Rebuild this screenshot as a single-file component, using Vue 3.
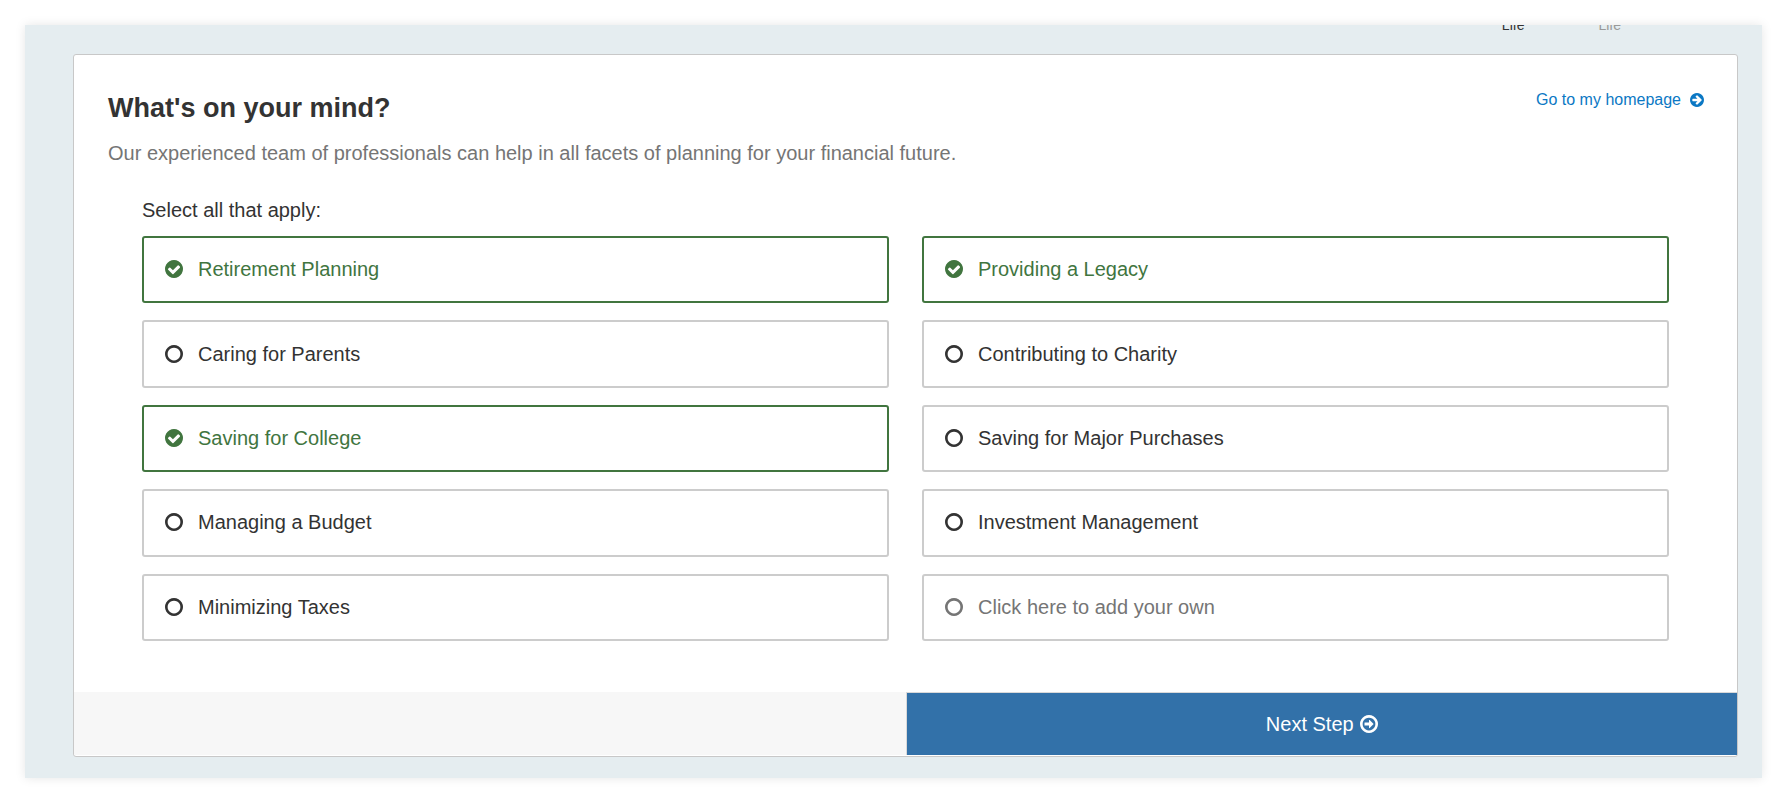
<script setup>
import { reactive } from 'vue'

const ring =
  'M896 896m768 0q0 209-103 385.5t-279.5 279.5-385.5 103-385.5-103-279.5-279.5-103-385.5 103-385.5 279.5-279.5 385.5-103 385.5 103 279.5 279.5 103 385.5z'
const hollow =
  'M896 352q-148 0-273 73t-198 198-73 273 73 273 198 198 273 73 273-73 198-198 73-273-73-273-198-198-273-73z'
const icons = {
  check:
    'M1412 734q0-28-18-46l-91-90q-19-19-45-19t-45 19l-408 407-226-226q-19-19-45-19t-45 19l-91 90q-18 18-18 46 0 27 18 45l362 362q19 19 45 19 27 0 46-19l543-543q18-18 18-45z' + ring,
  circle: hollow + ring,
  arrow:
    'M1413 896q0-27-18-45l-362-362-91-91q-18-18-45-18t-45 18l-91 91q-18 18-18 45t18 45l189 189h-502q-26 0-45 19t-19 45v128q0 26 19 45t45 19h502l-189 189q-19 19-19 45t19 45l91 91q18 18 45 18t45-18l91-91 362-362q18-18 18-45z' + ring,
  arrowOutline:
    'M1280 896q0 14-9 23l-320 320q-9 9-23 9-13 0-22.5-9.5t-9.5-22.5v-192h-352q-13 0-22.5-9.5t-9.5-22.5v-192q0-13 9.5-22.5t22.5-9.5h352v-192q0-14 9-23t23-9q12 0 24 10l319 319q9 9 9 23z' + hollow + ring,
}

const options = reactive([
  { label: 'Retirement Planning', checked: true },
  { label: 'Providing a Legacy', checked: true },
  { label: 'Caring for Parents', checked: false },
  { label: 'Contributing to Charity', checked: false },
  { label: 'Saving for College', checked: true },
  { label: 'Saving for Major Purchases', checked: false },
  { label: 'Managing a Budget', checked: false },
  { label: 'Investment Management', checked: false },
  { label: 'Minimizing Taxes', checked: false },
])
</script>

<template>
  <div class="page">
    <div class="stage">
      <div class="steps">
        <span class="step current">Life</span>
        <span class="step">Life</span>
      </div>
      <main class="card">
        <div class="body">
          <header class="head">
            <h1>What's on your mind?</h1>
            <a class="home" href="#">
              Go to my homepage
              <svg class="icon small" viewBox="128 128 1536 1536" aria-hidden="true">
                <path fill-rule="evenodd" :d="icons.arrow" />
              </svg>
            </a>
          </header>
          <p class="intro">
            Our experienced team of professionals can help in all facets of planning for your financial future.
          </p>
          <fieldset class="choices">
            <legend>Select all that apply:</legend>
            <div class="grid">
              <label v-for="o in options" :key="o.label" class="option" :class="{ selected: o.checked }">
                <input v-model="o.checked" type="checkbox" />
                <svg class="icon" viewBox="128 128 1536 1536" aria-hidden="true">
                  <path fill-rule="evenodd" :d="o.checked ? icons.check : icons.circle" />
                </svg>
                <span>{{ o.label }}</span>
              </label>
              <button type="button" class="option add">
                <svg class="icon" viewBox="128 128 1536 1536" aria-hidden="true">
                  <path fill-rule="evenodd" :d="icons.circle" />
                </svg>
                <span>Click here to add your own</span>
              </button>
            </div>
          </fieldset>
        </div>
        <footer class="foot">
          <button type="button" class="next">
            <span>Next Step</span>
            <svg class="icon" viewBox="128 128 1536 1536" aria-hidden="true">
              <path fill-rule="evenodd" :d="icons.arrowOutline" />
            </svg>
          </button>
        </footer>
      </main>
    </div>
  </div>
</template>

<style>
body {
  margin: 0;
  background: #fff;
}
</style>

<style scoped>
.page {
  padding: 25px;
  font-family: "Liberation Sans", Arial, sans-serif;
  font-size: 20px;
  line-height: 28px;
  color: #333;
}
.stage {
  padding: 0 24px 21px 48px;
  background: #e5edf0;
  box-shadow: 0 0 10px rgba(0, 0, 0, 0.1);
  overflow: hidden;
}
.steps {
  display: flex;
  justify-content: flex-end;
  gap: 74px;
  margin-top: -8px;
  padding: 0 117px 21px 0;
  font-size: 14px;
  line-height: 16px;
}
.step {
  color: #999;
}
.step.current {
  color: #333;
}
.card {
  padding-bottom: 1px;
  background: #fff;
  border: 1px solid #c8c8c8;
  border-radius: 3px;
}
.body {
  padding: 34px 33px 51px 34px;
}
.head {
  display: flex;
  justify-content: space-between;
  align-items: flex-start;
}
h1 {
  margin: 0;
  font-size: 27px;
  line-height: 38px;
  font-weight: 700;
}
.home {
  display: flex;
  align-items: center;
  gap: 9px;
  font-size: 16px;
  line-height: 22px;
  color: #0b78c4;
  text-decoration: none;
}
.icon {
  width: 18px;
  height: 18px;
  flex: none;
  fill: currentColor;
}
.icon.small {
  width: 14px;
  height: 14px;
}
.intro {
  margin: 12px 0 0;
  color: #757575;
}
.choices {
  min-width: 0;
  margin: 29px 35px 0 34px;
  padding: 0;
  border: 0;
}
legend {
  padding: 0;
}
.grid {
  display: grid;
  grid-template-columns: 1fr 1fr;
  grid-auto-rows: 1fr;
  gap: 17px 33px;
  min-height: 405px;
  margin-top: 12px;
}
.option {
  position: relative;
  display: flex;
  align-items: center;
  gap: 15px;
  box-sizing: border-box;
  padding: 0 21px 1px;
  background: #fff;
  border: 2px solid #ccc;
  border-radius: 3px;
  cursor: pointer;
}
.option input {
  position: absolute;
  inset: 0;
  width: 100%;
  height: 100%;
  margin: 0;
  opacity: 0;
  cursor: pointer;
}
.option.selected {
  color: #41753f;
  border-color: #41753f;
}
.add {
  font: inherit;
  color: #757575;
  text-align: left;
}
.foot {
  display: grid;
  grid-template-columns: 1fr 1fr;
  background: #f7f7f7;
}
.next {
  grid-column: 2;
  display: flex;
  justify-content: center;
  align-items: center;
  gap: 6px;
  padding: 17px;
  font: inherit;
  color: #fff;
  background: #3271a9;
  border: solid #d9d9d9;
  border-width: 1px 0 0 1px;
  cursor: pointer;
}
</style>
